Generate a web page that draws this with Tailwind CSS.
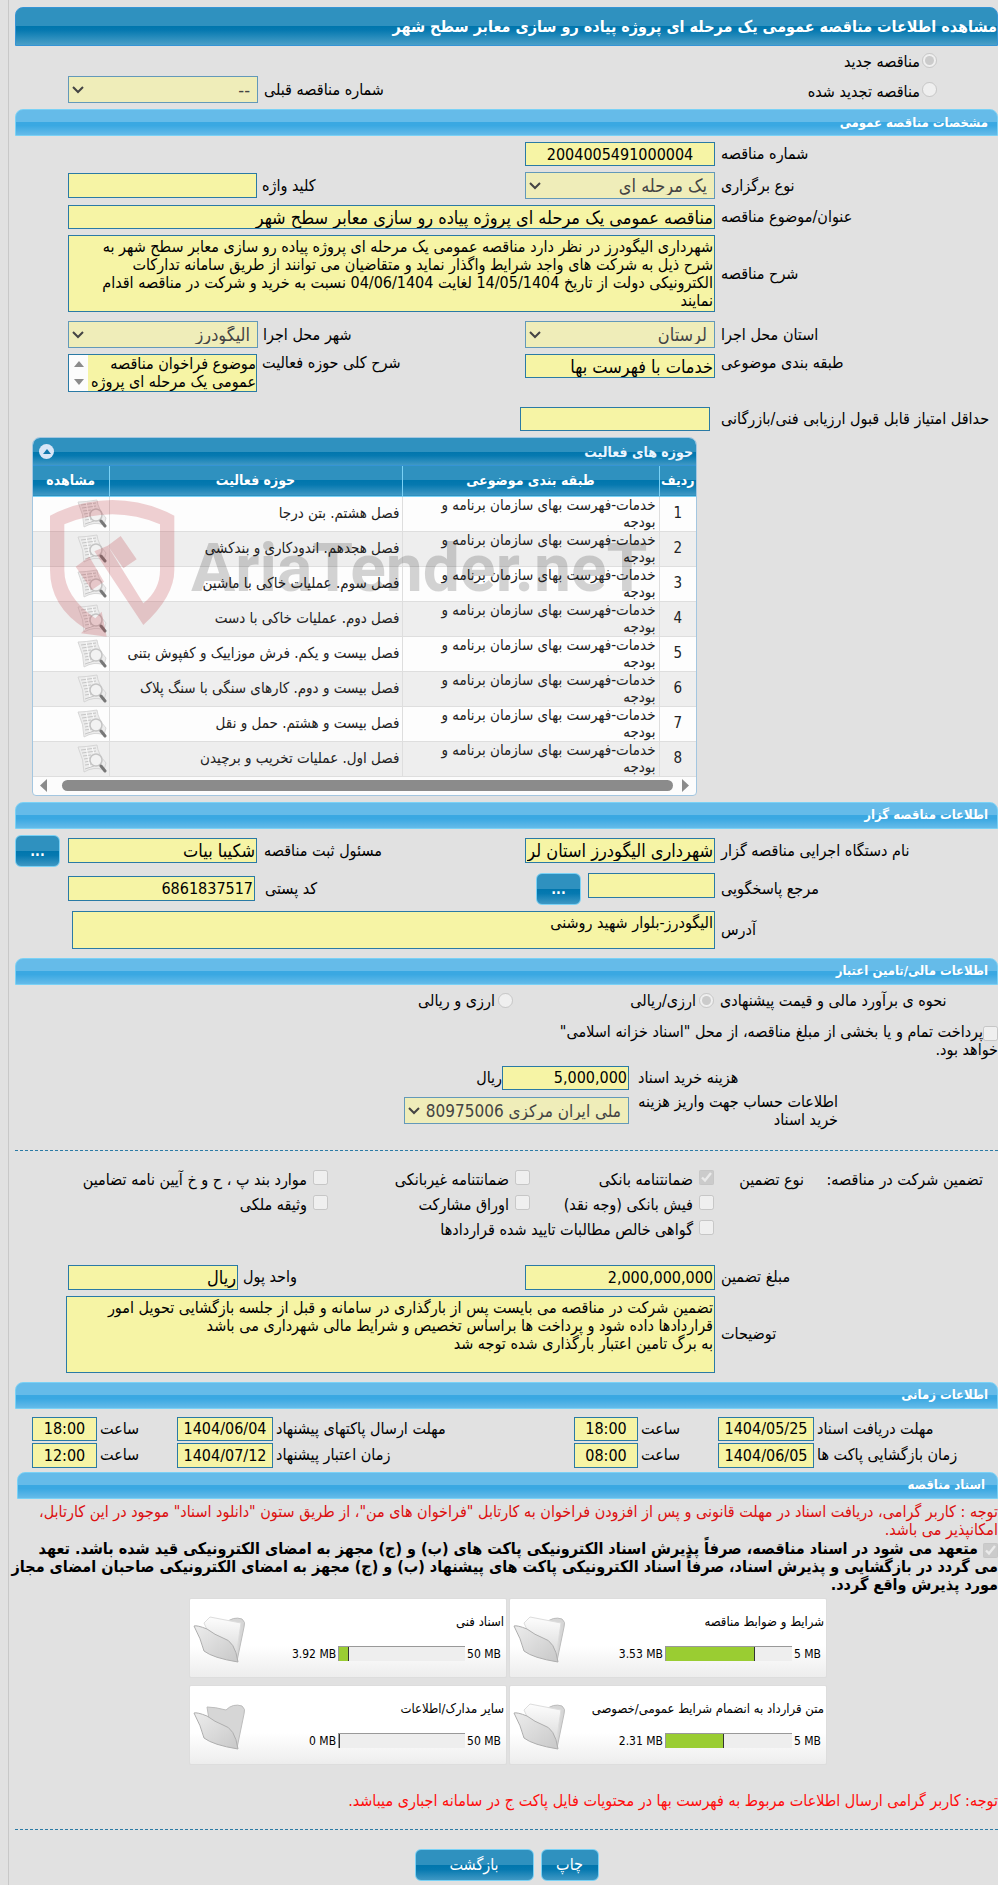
<!DOCTYPE html>
<html lang="fa" dir="rtl">

<head>
  <meta charset="UTF-8">
  <meta name="viewport" content="width=device-width, initial-scale=1.0">
  <script src="https://cdn.jsdelivr.net/npm/@tailwindcss/browser@4"></script>
  <title>مشاهده اطلاعات مناقصه عمومی</title>
</head>

<body class="bg-[#e1e1e1] pl-2 text-black text-[16px] leading-[18px] font-['DejaVu_Sans_Condensed','DejaVu_Sans',sans-serif] overflow-x-hidden">
  <main class="flex flex-col border-l border-[#c8c8c8] pl-1.5 pt-[7px] pb-[5px]">

    <h1 class="flex h-[39px] items-center rounded-t-lg border border-[#3594d5] bg-[linear-gradient(#2f91bf_50%,#0076ad_50%,#0679b0_60%,#4a9fc8)] text-[16px] font-bold text-white whitespace-nowrap">مشاهده اطلاعات مناقصه عمومی یک مرحله ای پروژه پیاده رو سازی معابر سطح شهر</h1>

    <div class="flex h-7 items-center gap-0.5 pr-[61px]">
      <input type="radio" name="kind" id="kind-new" class="size-[15px]" checked disabled>
      <label for="kind-new" class="pt-1">مناقصه جدید</label>
    </div>
    <div class="mt-0.5 flex items-center justify-between pr-[61px] pl-[53px]">
      <div class="flex items-center gap-0.5">
        <input type="radio" name="kind" id="kind-renew" class="size-[15px]" disabled>
        <label for="kind-renew" class="pt-1">مناقصه تجدید شده</label>
      </div>
      <div class="flex items-center gap-1.5">
        <label for="prev">شماره مناقصه قبلی</label>
        <div class="relative">
          <select id="prev" class="block h-[27px] w-[190px] appearance-none border border-[#6399b9] bg-[#efedb9] px-[7px] text-[18px] text-[#444]" disabled><option>--</option></select>
          <svg class="pointer-events-none absolute top-2.5 left-1" width="12" height="8" viewBox="0 0 12 8" fill="none" stroke="#444" stroke-width="2"><path d="M1 1l5 5 5-5" /></svg>
        </div>
      </div>
    </div>

    <h2 class="mt-1.5 flex h-[27px] items-center rounded-t-lg border border-[#7ad1f5] bg-[linear-gradient(#65bbe9_48%,#3aa8e2_50%,#3aa8e2_62%,#65bbe9)] pr-[9px] text-[13px] font-bold text-white">مشخصات مناقصه عمومی</h2>

    <section class="mt-1.5 flex flex-col gap-1.5 pl-[53px]">
      <div class="flex items-center">
        <label for="number" class="w-[283px] shrink-0 pl-1.5 text-left">شماره مناقصه</label>
        <input id="number" class="h-6 w-[190px] border border-[#2a7aa5] bg-[#f6f4a5] text-center text-[16px]" value="2004005491000004" readonly>
      </div>
      <div class="flex items-center">
        <label for="type" class="w-[283px] shrink-0 pl-1.5 text-left">نوع برگزاری</label>
        <div class="relative">
          <select id="type" class="block h-[27px] w-[190px] appearance-none border border-[#6399b9] bg-[#efedb9] px-[7px] text-[18px] text-[#444]" disabled><option>یک مرحله ای</option></select>
          <svg class="pointer-events-none absolute top-2.5 left-1" width="12" height="8" viewBox="0 0 12 8" fill="none" stroke="#444" stroke-width="2"><path d="M1 1l5 5 5-5" /></svg>
        </div>
        <label for="keyword" class="grow pl-[5px] text-left">کلید واژه</label>
        <input id="keyword" class="h-[25px] w-[189px] border border-[#2a7aa5] bg-[#f6f4a5] text-[18px]" readonly>
      </div>
      <div class="flex items-center">
        <label for="subject" class="w-[283px] shrink-0 pl-1.5 text-left">عنوان/موضوع مناقصه</label>
        <input id="subject" class="h-6 min-w-0 grow border border-[#2a7aa5] bg-[#f6f4a5] px-px text-[18px]" value="مناقصه عمومی یک مرحله ای پروژه پیاده رو سازی معابر سطح شهر" readonly>
      </div>
      <div class="flex items-center">
        <label for="desc" class="w-[283px] shrink-0 pl-1.5 text-left">شرح مناقصه</label>
        <textarea id="desc" class="h-[77px] min-w-0 grow resize-none overflow-hidden border border-[#2a7aa5] bg-[#f6f4a5] px-px py-0.5" readonly>شهرداری الیگودرز در نظر دارد مناقصه عمومی یک مرحله ای پروژه پیاده رو سازی معابر سطح شهر به
شرح ذیل به شرکت های واجد شرایط واگذار نماید و متقاضیان می توانند از طریق سامانه تدارکات
الکترونیکی دولت از تاریخ 14/05/1404 لغایت 04/06/1404 نسبت به خرید و شرکت در مناقصه اقدام
نمایند</textarea>
      </div>
      <div class="mt-[3px] flex items-center">
        <label for="province" class="w-[283px] shrink-0 pl-1.5 text-left">استان محل اجرا</label>
        <div class="relative">
          <select id="province" class="block h-[27px] w-[190px] appearance-none border border-[#6399b9] bg-[#efedb9] px-[7px] text-[18px] text-[#444]" disabled><option>لرستان</option></select>
          <svg class="pointer-events-none absolute top-2.5 left-1" width="12" height="8" viewBox="0 0 12 8" fill="none" stroke="#444" stroke-width="2"><path d="M1 1l5 5 5-5" /></svg>
        </div>
        <label for="city" class="grow pl-[5px] text-left">شهر محل اجرا</label>
        <div class="relative">
          <select id="city" class="block h-[27px] w-[190px] appearance-none border border-[#6399b9] bg-[#efedb9] px-[7px] text-[18px] text-[#444]" disabled><option>الیگودرز</option></select>
          <svg class="pointer-events-none absolute top-2.5 left-1" width="12" height="8" viewBox="0 0 12 8" fill="none" stroke="#444" stroke-width="2"><path d="M1 1l5 5 5-5" /></svg>
        </div>
      </div>
      <div class="flex items-start">
        <label for="category" class="w-[283px] shrink-0 pl-1.5 text-left">طبقه بندی موضوعی</label>
        <input id="category" class="h-6 w-[190px] border border-[#2a7aa5] bg-[#f6f4a5] px-px text-[18px]" value="خدمات با فهرست بها" readonly>
        <label for="scope" class="grow pl-[5px] text-left">شرح کلی حوزه فعالیت</label>
        <div class="flex h-[38px] w-[189px] border border-[#2a7aa5] bg-[#f6f4a5]">
          <textarea id="scope" class="min-w-0 grow resize-none overflow-hidden" readonly>موضوع فراخوان مناقصه
عمومی یک مرحله ای پروژه</textarea>
          <div class="flex w-[19px] shrink-0 flex-col items-center justify-between bg-[#fcfcfc] py-1.5">
            <svg width="10" height="6" viewBox="0 0 10 6" fill="#8b8b8b"><path d="M0 6L5 0l5 6z" /></svg>
            <svg width="10" height="6" viewBox="0 0 10 6" fill="#8b8b8b"><path d="M0 0l5 6 5-6z" /></svg>
          </div>
        </div>
      </div>
      <div class="mt-[9px] flex items-center">
        <label for="minscore" class="w-[288px] shrink-0 pl-[11px] text-left">حداقل امتیاز قابل قبول ارزیابی فنی/بازرگانی</label>
        <input id="minscore" class="h-6 w-[190px] border border-[#2a7aa5] bg-[#f6f4a5] text-[16px]" readonly>
      </div>
    </section>

    <!-- activity grid -->
    <section class="relative mt-1.5 mr-[301px] ml-[17px] overflow-hidden rounded-t-lg rounded-b-sm border border-[#a3c6e0] bg-[#fcfcfc]">
      <div class="flex h-7 items-center justify-between border-b border-[#3594d5] bg-[linear-gradient(#2f91bf_50%,#0076ad_50%,#0679b0_65%,#3f98c4)] pr-[3px] pl-1.5">
        <h3 class="text-[14px] font-bold text-[#eaf5ff]">حوزه های فعالیت</h3>
        <button type="button" aria-label="بستن" class="flex size-[15px] items-center justify-center rounded-full bg-[#d9e6f7]">
          <svg width="8" height="5" viewBox="0 0 8 5" fill="#1478ad"><path d="M0 5l4-5 4 5z" /></svg>
        </button>
      </div>
      <table class="w-full table-fixed border-collapse text-[15px] leading-[17px] text-[#222]">
        <thead>
          <tr class="h-[30px] border-b border-[#7ad1f5] bg-[linear-gradient(#2f91bf_50%,#0076ad_50%,#0679b0_65%,#3f98c4)] text-[14px] text-white">
            <th class="w-[37px] p-0 whitespace-nowrap">ردیف</th>
            <th class="w-[257px] border-r border-[#7ad1f5] p-0">طبقه بندی موضوعی</th>
            <th class="border-r border-[#7ad1f5] p-0">حوزه فعالیت</th>
            <th class="w-[76px] border-r border-[#7ad1f5] p-0">مشاهده</th>
          </tr>
        </thead>
        <tbody id="rows"></tbody>
      </table>
      <div class="flex h-[18px] items-center gap-[9px] px-[7px]">
        <svg width="7" height="13" viewBox="0 0 7 13" fill="#8b8b8b"><path d="M0 0l7 6.500L0 13z" /></svg>
        <div class="h-[11px] grow rounded-full bg-[#8b8b8b]"></div>
        <svg class="mr-1.5" width="7" height="13" viewBox="0 0 7 13" fill="#8b8b8b"><path d="M7 0L0 6.500 7 13z" /></svg>
      </div>
      <!-- watermark -->
      <div dir="ltr" class="pointer-events-none absolute top-[62px] left-[17px] flex items-center gap-4" aria-hidden="true">
        <svg width="125" height="137" viewBox="150 210 375 411" fill="#b92f38" fill-opacity=".22" fill-rule="evenodd">
          <path d="M150 257Q240 210 337 210T523 257V420Q523 500 430 585L283 364 323 347 430 520Q480 480 480 420V283Q410 253 337 253T193 283V420Q193 500 286 565L305 545 320 620 243 610 256 596Q150 530 150 420Z" />
          <path d="M323 347L362 318 410 388 370 415ZM227 410L268 380 312 455 275 480Z" />
        </svg>
        <span class="font-[Roboto] text-[66px] leading-[80px] font-bold text-black/17">AriaTender.neT</span>
      </div>
    </section>

    <h2 class="mt-1.5 flex h-[27px] items-center rounded-t-lg border border-[#7ad1f5] bg-[linear-gradient(#65bbe9_48%,#3aa8e2_50%,#3aa8e2_62%,#65bbe9)] pr-[9px] text-[13px] font-bold text-white">اطلاعات مناقصه گزار</h2>

    <section class="mt-1.5 flex flex-col gap-1.5">
      <div class="flex h-8 items-center">
        <label for="agency" class="w-[283px] shrink-0 pl-1.5 text-left">نام دستگاه اجرایی مناقصه گزار</label>
        <input id="agency" class="h-[25px] w-[190px] border border-[#2a7aa5] bg-[#f6f4a5] px-px text-[18px]" value="شهرداری الیگودرز استان لرستان" readonly>
        <label for="officer" class="grow pl-[7px] text-left">مسئول ثبت مناقصه</label>
        <input id="officer" class="h-[25px] w-[189px] border border-[#2a7aa5] bg-[#f6f4a5] px-px text-[18px]" value="شکیبا بیات" readonly>
        <button type="button" class="mr-2 h-8 w-[45px] rounded-md border border-[#7ad1f5] bg-[linear-gradient(#2f91bf_50%,#0076ad_50%,#0679b0_65%,#3f98c4)] text-[14px] font-bold text-white">...</button>
      </div>
      <div class="flex h-8 items-center pl-[53px]">
        <label for="contact" class="w-[283px] shrink-0 pl-1.5 text-left">مرجع پاسخگویی</label>
        <input id="contact" class="h-[25px] w-[127px] self-start border border-[#2a7aa5] bg-[#f6f4a5] text-[18px]" readonly>
        <button type="button" class="mr-[7px] h-8 w-[45px] rounded-md border border-[#7ad1f5] bg-[linear-gradient(#2f91bf_50%,#0076ad_50%,#0679b0_65%,#3f98c4)] text-[14px] font-bold text-white">...</button>
        <label for="postal" class="grow pl-2.5 text-left">کد پستی</label>
        <input id="postal" class="h-[25px] w-[187px] border border-[#2a7aa5] bg-[#f6f4a5] px-px text-[16px]" value="6861837517" readonly>
      </div>
      <div class="flex items-center pl-[57px]">
        <label for="address" class="w-[283px] shrink-0 pl-1.5 text-left">آدرس</label>
        <textarea id="address" class="h-[38px] min-w-0 grow resize-none overflow-hidden border border-[#2a7aa5] bg-[#f6f4a5] px-px py-0.5" readonly>الیگودرز-بلوار شهید روشنی</textarea>
      </div>
    </section>

    <h2 class="mt-[9px] flex h-[27px] items-center rounded-t-lg border border-[#7ad1f5] bg-[linear-gradient(#65bbe9_48%,#3aa8e2_50%,#3aa8e2_62%,#65bbe9)] pr-[9px] text-[13px] font-bold text-white">اطلاعات مالی/تامین اعتبار</h2>

    <section>
      <div class="flex h-8 items-center">
        <span class="w-[284px] shrink-0 pl-1.5 text-left">نحوه ی برآورد مالی و قیمت پیشنهادی</span>
        <div class="flex w-[201px] items-center gap-[3px]">
          <input type="radio" name="currency" id="cur-one" class="size-[15px]" checked disabled>
          <label for="cur-one">ارزی/ریالی</label>
        </div>
        <div class="flex items-center gap-[3px]">
          <input type="radio" name="currency" id="cur-both" class="size-[15px]" disabled>
          <label for="cur-both">ارزی و ریالی</label>
        </div>
      </div>
      <p class="mt-1.5">
        <input type="checkbox" id="treasury" class="size-[15px] align-bottom" disabled><label for="treasury">پرداخت تمام و یا بخشی از مبلغ مناقصه، از محل "اسناد خزانه اسلامی"<br>خواهد بود.</label>
      </p>
      <div class="mt-[7px] flex items-center">
        <label for="fee" class="w-[369px] shrink-0 pl-[9px] text-left">هزینه خرید اسناد</label>
        <input id="fee" class="h-6 w-[127px] border border-[#2a7aa5] bg-[#f6f4a5] px-px text-[16px]" value="5,000,000" readonly>
        <span>ریال</span>
      </div>
      <div class="mt-[3px] flex items-center">
        <label for="account" class="w-[369px] shrink-0 pr-[160px] whitespace-nowrap">اطلاعات حساب جهت واریز هزینه<br>خرید اسناد</label>
        <div class="relative">
          <select id="account" class="block h-[27px] w-[225px] appearance-none border border-[#6399b9] bg-[#efedb9] px-[7px] text-[17px] text-[#444]" disabled><option>ملی ایران مرکزی 80975006</option></select>
          <svg class="pointer-events-none absolute top-2.5 left-1" width="12" height="8" viewBox="0 0 12 8" fill="none" stroke="#444" stroke-width="2"><path d="M1 1l5 5 5-5" /></svg>
        </div>
      </div>
    </section>

    <hr class="mt-[21px] border-t border-dashed border-[#2a7aa5]">

    <section class="mt-3.5 flex pr-[15px]">
      <span class="w-[179px] shrink-0 pt-1.5">تضمین شرکت در مناقصه:</span>
      <span class="w-[90px] shrink-0 pt-1.5">نوع تضمین</span>
      <div class="grid grid-cols-[184px_202px_auto] *:flex *:h-[25px] *:items-center *:gap-1.5">
        <div><input type="checkbox" id="g1" class="size-[15px]" checked disabled><label for="g1" class="pt-1.5">ضمانتنامه بانکی</label></div>
        <div><input type="checkbox" id="g2" class="size-[15px]" disabled><label for="g2" class="pt-1.5">ضمانتنامه غیربانکی</label></div>
        <div><input type="checkbox" id="g3" class="size-[15px]" disabled><label for="g3" class="pt-1.5">موارد بند پ ، ح و خ آیین نامه تضامین</label></div>
        <div><input type="checkbox" id="g4" class="size-[15px]" disabled><label for="g4" class="pt-1.5">فیش بانکی (وجه نقد)</label></div>
        <div><input type="checkbox" id="g5" class="size-[15px]" disabled><label for="g5" class="pt-1.5">اوراق مشارکت</label></div>
        <div><input type="checkbox" id="g6" class="size-[15px]" disabled><label for="g6" class="pt-1.5">وثیقه ملکی</label></div>
        <div class="col-span-2"><input type="checkbox" id="g7" class="size-[15px]" disabled><label for="g7" class="pt-1.5">گواهی خالص مطالبات تایید شده قراردادها</label></div>
      </div>
    </section>

    <section class="mt-[25px] flex flex-col gap-1.5">
      <div class="flex items-center pl-[53px]">
        <label for="amount" class="w-[283px] shrink-0 pl-1.5 text-left">مبلغ تضمین</label>
        <input id="amount" class="h-[25px] w-[190px] border border-[#2a7aa5] bg-[#f6f4a5] px-px text-[16px]" value="2,000,000,000" readonly>
        <label for="unit" class="grow pl-[5px] text-left">واحد پول</label>
        <input id="unit" class="h-[25px] w-[170px] border border-[#2a7aa5] bg-[#f6f4a5] px-px text-[18px]" value="ریال" readonly>
      </div>
      <div class="flex items-center pl-[51px]">
        <label for="notes" class="w-[283px] shrink-0 pl-1.5 text-left">توضیحات</label>
        <textarea id="notes" class="h-[77px] min-w-0 grow resize-none overflow-hidden border border-[#2a7aa5] bg-[#f6f4a5] px-px py-0.5" readonly>تضمین شرکت در مناقصه می بایست پس از بارگذاری در سامانه و قبل از جلسه بازگشایی تحویل امور
قراردادها داده شود و پرداخت ها براساس تخصیص و شرایط مالی شهرداری می باشد
به برگ تامین اعتبار بارگذاری شده توجه شد</textarea>
      </div>
    </section>

    <h2 class="mt-[9px] flex h-[27px] items-center rounded-t-lg border border-[#7ad1f5] bg-[linear-gradient(#65bbe9_48%,#3aa8e2_50%,#3aa8e2_62%,#65bbe9)] pr-[9px] text-[13px] font-bold text-white">اطلاعات زمانی</h2>

    <section class="mt-2 flex flex-col gap-0.5 pl-[17px]">
      <div class="flex items-center">
        <label for="d1" class="w-[184px] shrink-0 pl-[3px] text-left">مهلت دریافت اسناد</label>
        <input id="d1" class="h-6 w-24 border border-[#2a7aa5] bg-[#f6f4a5] text-center text-[16px]" value="1404/05/25" readonly>
        <label for="t1" class="w-20 shrink-0 pl-[3px] text-left">ساعت</label>
        <input id="t1" class="h-6 w-16 border border-[#2a7aa5] bg-[#f6f4a5] text-center text-[16px]" value="18:00" readonly>
        <label for="d2" class="grow pl-[3px] text-left">مهلت ارسال پاکتهای پیشنهاد</label>
        <input id="d2" class="h-6 w-24 border border-[#2a7aa5] bg-[#f6f4a5] text-center text-[16px]" value="1404/06/04" readonly>
        <label for="t2" class="w-20 shrink-0 pl-[3px] text-left">ساعت</label>
        <input id="t2" class="h-6 w-[65px] border border-[#2a7aa5] bg-[#f6f4a5] text-center text-[16px]" value="18:00" readonly>
      </div>
      <div class="flex items-center">
        <label for="d3" class="w-[184px] shrink-0 pl-[3px] text-left">زمان بازگشایی پاکت ها</label>
        <input id="d3" class="h-[25px] w-24 border border-[#2a7aa5] bg-[#f6f4a5] text-center text-[16px]" value="1404/06/05" readonly>
        <label for="t3" class="w-20 shrink-0 pl-[3px] text-left">ساعت</label>
        <input id="t3" class="h-[25px] w-16 border border-[#2a7aa5] bg-[#f6f4a5] text-center text-[16px]" value="08:00" readonly>
        <label for="d4" class="grow pl-[3px] text-left">زمان اعتبار پیشنهاد</label>
        <input id="d4" class="h-[25px] w-24 border border-[#2a7aa5] bg-[#f6f4a5] text-center text-[16px]" value="1404/07/12" readonly>
        <label for="t4" class="w-20 shrink-0 pl-[3px] text-left">ساعت</label>
        <input id="t4" class="h-[25px] w-[65px] border border-[#2a7aa5] bg-[#f6f4a5] text-center text-[16px]" value="12:00" readonly>
      </div>
    </section>

    <h2 class="mt-1 ml-0.5 flex h-[27px] items-center rounded-t-lg border border-[#7ad1f5] bg-[linear-gradient(#65bbe9_48%,#3aa8e2_50%,#3aa8e2_62%,#65bbe9)] pr-3 text-[13px] font-bold text-white">اسناد مناقصه</h2>

    <p class="mt-1 text-[#dc0f0f] whitespace-nowrap">توجه : کاربر گرامی، دریافت اسناد در مهلت قانونی و پس از افزودن فراخوان به کارتابل "فراخوان های من"، از طریق ستون "دانلود اسناد" موجود در این کارتابل،<br>امکانپذیر می باشد.</p>
    <p class="mt-px font-bold whitespace-nowrap">
      <input type="checkbox" id="commit" class="size-[15px] align-bottom" checked disabled>
      <label for="commit">متعهد می شود در اسناد مناقصه، صرفاً پذیرش اسناد الکترونیکی پاکت های (ب) و (ج) مجهز به امضای الکترونیکی قید شده باشد. تعهد<br>می گردد در بازگشایی و پذیرش اسناد، صرفاً اسناد الکترونیکی پاکت های پیشنهاد (ب) و (ج) مجهز به امضای الکترونیکی صاحبان امضای مجاز<br>مورد پذیرش واقع گردد.</label>
    </p>

    <div id="cards" class="mt-1 mr-[171px] grid grid-cols-[318px_318px] gap-x-0.5 gap-y-[7px] text-[12px]"></div>

    <p class="mt-[27px] text-[#ff0d0d]">توجه: کاربر گرامی ارسال اطلاعات مربوط به فهرست بها در محتویات فایل پاکت ج در سامانه اجباری میباشد.</p>

    <hr class="mt-[19px] border-t border-dashed border-[#2a7aa5]">

    <div class="mt-[19px] flex justify-center gap-[7px]">
      <button type="button" class="h-8 w-[58px] rounded-md border border-[#7ad1f5] bg-[linear-gradient(#2f91bf_50%,#0076ad_50%,#0679b0_65%,#3f98c4)] text-white">چاپ</button>
      <button type="button" class="h-8 w-[119px] rounded-md border border-[#7ad1f5] bg-[linear-gradient(#2f91bf_50%,#0076ad_50%,#0679b0_65%,#3f98c4)] text-white">بازگشت</button>
    </div>
  </main>

  <!-- shared gradients of the folder icons -->
  <svg class="absolute size-0">
    <linearGradient id="paper" x1="0" y1="0" x2="0" y2="1"><stop offset="0" stop-color="#fdfdfd" /><stop offset="1" stop-color="#d8d8d8" /></linearGradient>
    <linearGradient id="front" x1="0" y1="0" x2="1" y2="1"><stop offset="0" stop-color="#ececec" /><stop offset="1" stop-color="#c8c8c8" /></linearGradient>
  </svg>

  <script>
    const activities = [
      'فصل هشتم. بتن درجا',
      'فصل هجدهم. اندودکاری و بندکشی',
      'فصل سوم. عملیات خاکی با ماشین',
      'فصل دوم. عملیات خاکی با دست',
      'فصل بیست و یکم. فرش موزاییک و کفپوش بتنی',
      'فصل بیست و دوم. کارهای سنگی با سنگ پلاک',
      'فصل بیست و هشتم. حمل و نقل',
      'فصل اول. عملیات تخریب و برچیدن'
    ];

    document.getElementById('rows').innerHTML = activities.map((name, i) => `
      <tr class="h-[35px] border-b border-[#dedede] odd:bg-[#fdfdfd] even:bg-[#eee]">
        <td class="p-0 text-center">${i + 1}</td>
        <td class="border-r border-[#dedede] py-0 pr-[3px]">خدمات-فهرست بهای سازمان برنامه و<br>بودجه</td>
        <td class="border-r border-[#dedede] py-0 pr-0.5 whitespace-nowrap">${name}</td>
        <td class="border-r border-[#dedede] py-0 pr-0.5">
          <button type="button" aria-label="مشاهده" class="block">
            <svg width="30" height="30" viewBox="0 0 30 30">
              <path d="M1 3Q8 3 20 1Q21 10 29 19L27 26Q17 22 7 28Q7 16 1 3Z" fill="#ececec" stroke="#cfcfcf" stroke-width=".8" />
              <path d="M4 6l15-2M5 9l14-2M6 12l8-1M7 15l6-1M8 18l5-1M8 21l6-1M8 25l9-3" stroke="#c6c6c6" />
              <path d="M9 3l4 20M15 3l2 7" stroke="#fafafa" stroke-width="1" />
              <circle cx="19" cy="16" r="6" fill="#f3f3f3" fill-opacity=".9" stroke="#c4c4c4" stroke-width="1.500" />
              <path d="M24 22l4 5" stroke="#777" stroke-width="3" stroke-linecap="round" />
            </svg>
          </button>
        </td>
      </tr>`).join('');

    const docs = [
      { name: 'شرایط و ضوابط مناقصه', used: 3.53, max: 5 },
      { name: 'اسناد فنی', used: 3.92, max: 50 },
      { name: 'متن قرارداد به انضمام شرایط عمومی/خصوصی', used: 2.31, max: 5 },
      { name: 'سایر مدارک/اطلاعات', used: 0, max: 50 }
    ];

    document.getElementById('cards').innerHTML = docs.map(doc => `
      <div class="flex h-[80px] justify-between rounded-xs border border-[#ddd] bg-linear-to-b from-white from-60% to-[#ededed]">
        <div class="flex grow flex-col pt-3.5 pr-0.5">
          <span class="text-[13px] whitespace-nowrap">${doc.name}</span>
          <div class="mt-3.5 flex items-center pr-[3px]">
            <span dir="ltr" class="pl-0.5">${doc.max} MB</span>
            <div dir="ltr" class="h-[15px] w-[127px] border-t border-l border-[#999] bg-[#eee]">
              <div class="h-full border-r border-[#333] bg-[#9acd32]" style="width:${Math.max(doc.used / doc.max * 100, 1)}%"></div>
            </div>
            <span dir="ltr" class="pr-0.5">${doc.used} MB</span>
          </div>
        </div>
        <svg class="mt-4 ml-[3px] shrink-0" width="54" height="50" viewBox="0 0 54 50" stroke-linejoin="round">
          <path d="M14 5Q22 5 33 8Q40 1 49 4Q53 7 51 12L44 46L18 30Z" fill="#d6d6d6" stroke="#bdbdbd" />
          ${doc.used ? '<path d="M11 8L17 2 48 8 43 42 20 28Z" fill="url(#paper)" stroke="#ddd" />' : ''}
          <path d="M1 11Q4 10 14 14Q22 20 30 23Q42 26 45 47Q20 43 11 36Q8 24 1 11Z" fill="url(#front)" stroke="#aeaeae" />
        </svg>
      </div>`).join('');
  </script>
</body>

</html>
